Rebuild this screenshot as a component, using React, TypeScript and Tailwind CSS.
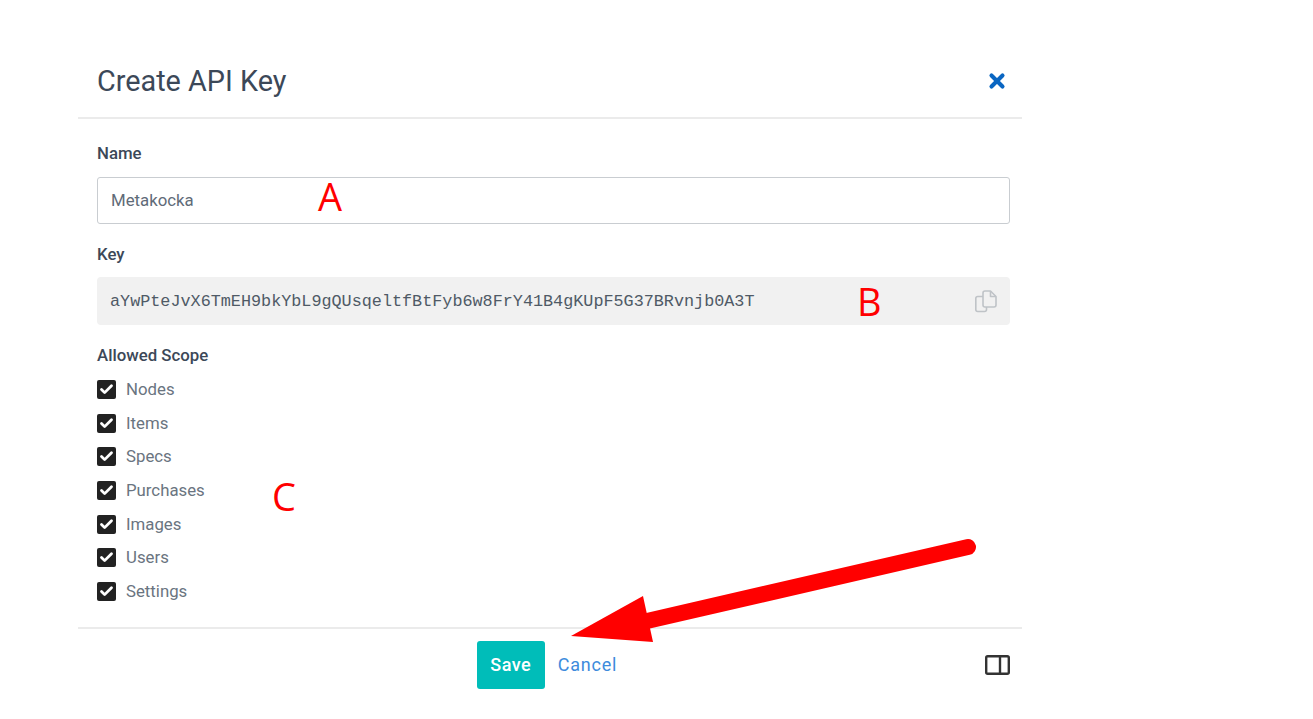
import { Check, X } from 'lucide-react';

const scopes = ['Nodes', 'Items', 'Specs', 'Purchases', 'Images', 'Users', 'Settings'];

function CopyIcon() {
  return (
    <svg width="22" height="23" viewBox="0 0 22 23" fill="none" stroke="#bfc3c7" strokeWidth="1.6" strokeLinejoin="round">
      <path d="M8 6.500H2.800a2 2 0 0 0-2 2v11a2 2 0 0 0 2 2h6.700a2 2 0 0 0 2-2v-2.500" />
      <path d="M8 3a2 2 0 0 1 2-2h5.500L21 6.500v8.500a2 2 0 0 1-2 2H10a2 2 0 0 1-2-2z" />
      <path d="M15.500 1v5.500H21" />
    </svg>
  );
}

function PanelIcon() {
  return (
    <svg width="25" height="20" viewBox="0 0 25 20" fill="none" stroke="#333333" strokeWidth="2.400">
      <rect x="1.200" y="1.200" width="22.600" height="17.600" rx="1.500" />
      <path d="M15 1v18" />
    </svg>
  );
}

function Annotations() {
  return (
    <svg className="absolute left-0 top-0 pointer-events-none" width="1313" height="719" viewBox="0 0 1313 719">
      <path d="M968 547 L647 621" stroke="#ff0000" strokeWidth="16" strokeLinecap="round" fill="none" />
      <polygon points="571,636 643,596 653,642" fill="#ff0000" />
    </svg>
  );
}

export default function App() {
  return (
    <div className="relative w-[1313px] h-[719px] overflow-hidden bg-white font-['Roboto',sans-serif]">
      <div className="ml-[78px] w-[944px] pt-[60px]">
        {/* Header */}
        <div className="flex items-center justify-between h-[59px] pl-[19px] pr-[14px] pb-[15px] border-b-2 border-[#ebebeb]">
          <h2 className="text-[28.8px] leading-[32px] text-[#3c4858]">Create API Key</h2>
          <X className="w-[22px] h-[22px] text-[#0a66c2]" strokeWidth={4.5} />
        </div>

        {/* Body */}
        <div className="pl-[19px] pr-[12px]">
          <label className="block mt-[24px] text-[16.8px] leading-[20px] font-medium text-[#3c4858]">Name</label>
          <div className="mt-[14px] h-[47px] flex items-center px-[13px] border border-[#c9cdd1] rounded-[3px] text-[16.8px] text-[#5f6b78]">
            Metakocka
          </div>

          <label className="block mt-[20px] text-[16.8px] leading-[20px] font-medium text-[#3c4858]">Key</label>
          <div className="mt-[13px] h-[48px] flex items-center justify-between pl-[13px] pr-[13px] bg-[#f1f1f1] rounded-[4px]">
            <span className="pt-[2px] font-['Liberation_Mono',monospace] text-[16.8px] text-[#4f5a66]">
              aYwPteJvX6TmEH9bkYbL9gQUsqeltfBtFyb6w8FrY41B4gKUpF5G37BRvnjb0A3T
            </span>
            <CopyIcon />
          </div>

          <label className="block mt-[20px] text-[16.8px] leading-[20px] font-medium text-[#3c4858]">Allowed Scope</label>
          <div className="mt-[8px] flex flex-col">
            {scopes.map((scope) => (
              <div key={scope} className="flex items-center h-[33.6px] gap-[10px]">
                <span className="flex items-center justify-center w-[19px] h-[19px] rounded-[2px] bg-[#222222]">
                  <Check className="w-[15px] h-[15px] text-white" strokeWidth={4.5} />
                </span>
                <span className="text-[16.8px] text-[#6a7480]">{scope}</span>
              </div>
            ))}
          </div>
        </div>

        {/* Footer */}
        <div className="relative mt-[19px] flex items-center justify-center h-[73px] border-t-2 border-[#ebebeb]">
          <div className="flex items-center gap-[13px] pr-[6px]">
            <button className="w-[68px] h-[48px] rounded-[3px] bg-[#00bdb9] text-white text-[18px] font-medium tracking-[0.5px]">
              Save
            </button>
            <button className="text-[18px] text-[#3d8bdc] tracking-[0.8px]">Cancel</button>
          </div>
          <div className="absolute right-[12px] top-[26px] flex">
            <PanelIcon />
          </div>
        </div>
      </div>

      <Annotations />
      <span className="absolute left-[318px] top-[173px] text-[38px] leading-[46px] text-[#ff0000] font-['Open_Sans',sans-serif]">A</span>
      <span className="absolute left-[857px] top-[278px] text-[38px] leading-[46px] text-[#ff0000] font-['Open_Sans',sans-serif]">B</span>
      <span className="absolute left-[272px] top-[473px] text-[38px] leading-[46px] text-[#ff0000] font-['Open_Sans',sans-serif]">C</span>
    </div>
  );
}
